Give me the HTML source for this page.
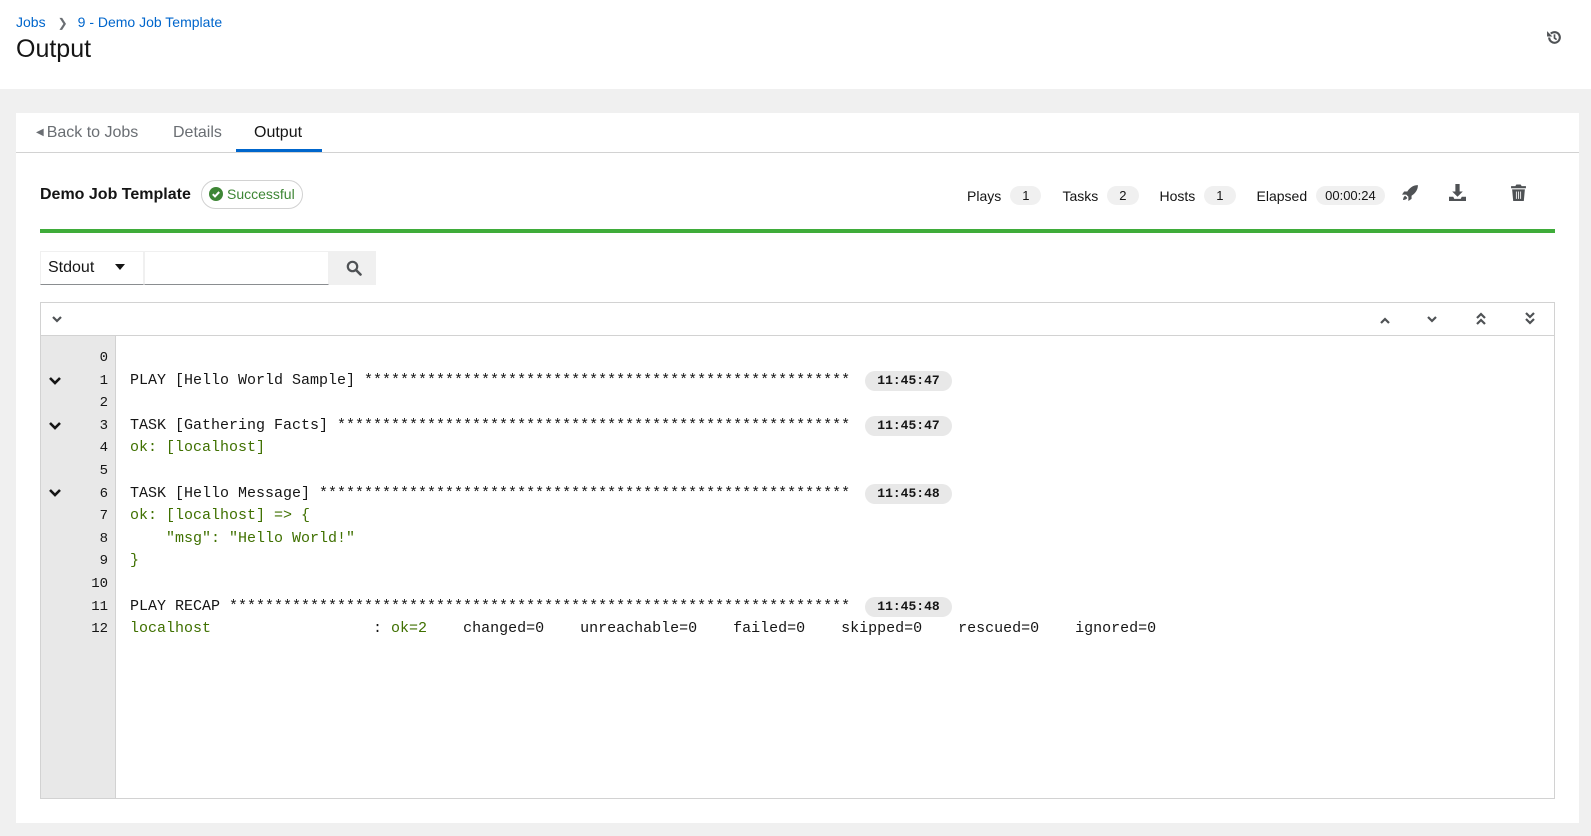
<!DOCTYPE html>
<html><head><meta charset="utf-8"><style>
*{box-sizing:border-box;margin:0;padding:0}
body{width:1591px;height:836px;background:#f0f0f0;font-family:"Liberation Sans",sans-serif;color:#151515;position:relative;overflow:hidden}
.hdr{position:absolute;left:0;top:0;width:1591px;height:89px;background:#fff}
.bc{position:absolute;left:16px;top:14px;font-size:14px;color:#06c}
.bc .sep{color:#6a6e73;margin:0 10px 0 12px;font-size:12px}
h1{position:absolute;left:16px;top:35px;font-size:25px;font-weight:400}
.card{position:absolute;left:16px;top:113px;width:1563px;height:710px;background:#fff}
.tabs{position:absolute;left:0;top:0;width:1563px;height:40px;border-bottom:1px solid #d2d2d2}
.tab{position:absolute;top:11px;font-size:16px;color:#6a6e73}
.ul{position:absolute;left:220px;top:36px;width:86px;height:3px;background:#06c}
.mono{font-family:"Liberation Mono",monospace}
.abs{position:absolute}
.pill{display:inline-block;background:#f0f0f0;border-radius:12px;font-size:13px;padding:2px 12px;margin-left:9px;vertical-align:1px}
.code{position:absolute;left:130px;font-size:15px;white-space:pre;line-height:22.6px}
.g{color:#3f7000}
.ln{position:absolute;width:68px;text-align:right;font-size:14px;left:40px}
.ts{position:absolute;left:865px;width:87px;height:20px;background:#e8e8e8;border-radius:10px;font:bold 13px "Liberation Mono",monospace;text-align:center;line-height:20px}
</style></head><body>
<div class="hdr">
<div class="bc">Jobs<span class="sep">&#10095;</span>9 - Demo Job Template</div>
<h1>Output</h1>
<svg class="abs" style="left:1546px;top:29px" width="17" height="17" viewBox="0 0 16 16"><path d="M3 8a5 5 0 1 0 1.5-3.6" fill="none" stroke="#4f5255" stroke-width="2"/><path d="M1 2v5h5z" fill="#4f5255"/><path d="M8 5v3.5l2 1.5" fill="none" stroke="#4f5255" stroke-width="1.6"/></svg>
</div>
<div class="card">
<div class="tabs">
<div class="tab" style="left:20px"><span style="font-size:10px;vertical-align:2px;margin-right:3px">&#9664;</span>Back to Jobs</div>
<div class="tab" style="left:157px">Details</div>
<div class="tab" style="left:238px;color:#151515">Output</div>
<div class="ul"></div>
</div>
<div class="abs" style="left:24px;top:73px;font-size:16px;font-weight:bold">Demo Job Template</div>
<div class="abs" style="left:185px;top:67px;width:102px;height:29px;border:1px solid #d2d2d2;border-radius:15px;font-size:14px;color:#3e8635;line-height:27px;padding-left:25px">Successful
<svg class="abs" style="left:7px;top:6px" width="14" height="14" viewBox="0 0 14 14"><circle cx="7" cy="7" r="7" fill="#3e8635"/><path d="M3.8 7.2l2.2 2.2 4.2-4.4" fill="none" stroke="#fff" stroke-width="2"/></svg></div>
<div class="abs" style="left:951px;top:73px;font-size:14px;white-space:nowrap">Plays<span class="pill">1</span><span style="margin-left:21px">Tasks</span><span class="pill">2</span><span style="margin-left:21px">Hosts</span><span class="pill">1</span><span style="margin-left:21px">Elapsed</span><span class="pill" style="padding:2px 9px">00:00:24</span></div>
<svg class="abs" style="left:1386px;top:71px" width="17" height="17" viewBox="0 0 16 16"><path d="M15 1C10 1 7 4 5 7H2L0 10h4l2 2v4l3-2v-3c3-2 6-5 6-10z" fill="#4f5255"/><path d="M3 11c-2 1-2 4-2 4s3 0 4-2z" fill="#4f5255"/></svg>
<svg class="abs" style="left:1433px;top:71px" width="17" height="17" viewBox="0 0 16 16"><path d="M6 0h4v7h3l-5 5-5-5h3z" fill="#4f5255"/><path d="M0 12h4l1 2h6l1-2h4v4H0z" fill="#4f5255"/></svg>
<svg class="abs" style="left:1495px;top:71px" width="15" height="17" viewBox="0 0 14 16"><path d="M0 2h4l1-1.5h4L10 2h4v2H0z" fill="#4f5255"/><path d="M1 5h12l-1 11H2z" fill="#4f5255"/><path d="M5 7v7M7 7v7M9 7v7" stroke="#fff" stroke-width=".8"/></svg>
<div class="abs" style="left:24px;top:116px;width:1515px;height:4px;background:#3fac3a"></div>
<div class="abs" style="left:24px;top:138px;width:104px;height:34px;border:1px solid #f0f0f0;border-bottom-color:#8a8d90;font-size:16px;line-height:32px;padding-left:7px">Stdout<span style="position:absolute;left:74px;top:12px;border:5px solid transparent;border-top:6px solid #151515"></span></div>
<div class="abs" style="left:128px;top:138px;width:185px;height:34px;border:1px solid #f0f0f0;border-bottom-color:#8a8d90"></div>
<div class="abs" style="left:313px;top:138px;width:47px;height:34px;background:#f0f0f0"></div>
<svg class="abs" style="left:330px;top:147px" width="16" height="16" viewBox="0 0 16 16"><circle cx="6.5" cy="6.5" r="4.7" fill="none" stroke="#4f5255" stroke-width="2.2"/><path d="M10 10l4.5 4.5" stroke="#4f5255" stroke-width="2.6" stroke-linecap="round"/></svg>
</div>
<div class="abs" style="left:40px;top:302px;width:1515px;height:497px;border:1px solid #d2d2d2;background:#fff"></div>
<div class="abs" style="left:40px;top:335px;width:1515px;height:1px;background:#d2d2d2"></div>
<div class="abs" style="left:41px;top:336px;width:75px;height:462px;background:#e8e8e8;border-right:1px solid #d2d2d2"></div>
<svg class="abs" style="left:0;top:0;pointer-events:none" width="1591" height="836">
<g fill="none" stroke="#4f5255" stroke-width="2.2">
<path d="M53 317l4 4 4-4"/>
<path d="M1381 323l4-4 4 4"/>
<path d="M1428 317l4 4 4-4"/>
<path d="M1477 318l4-4 4 4M1477 324l4-4 4 4"/>
<path d="M1526 313l4 4 4-4M1526 319l4 4 4-4"/>
</g>
<g fill="none" stroke="#151515" stroke-width="2.6">
<path d="M50 378l5 5 5-5"/><path d="M50 423l5 5 5-5"/><path d="M50 490l5 5 5-5"/>
</g>
</svg>
<div class="mono">
<div class="ln" style="top:347px;line-height:22.6px">0<br>1<br>2<br>3<br>4<br>5<br>6<br>7<br>8<br>9<br>10<br>11<br>12</div>
<div class="code" style="top:347px"><br>PLAY [Hello World Sample] ******************************************************<br><br>TASK [Gathering Facts] *********************************************************<br><span class="g">ok: [localhost]</span><br><br>TASK [Hello Message] ***********************************************************<br><span class="g">ok: [localhost] =&gt; {<br>    "msg": "Hello World!"<br>}</span><br><br>PLAY RECAP *********************************************************************<br><span class="g">localhost</span>                  : <span class="g">ok=2</span>    changed=0    unreachable=0    failed=0    skipped=0    rescued=0    ignored=0</div>
</div>
<div class="ts" style="top:371px">11:45:47</div>
<div class="ts" style="top:416px">11:45:47</div>
<div class="ts" style="top:484px">11:45:48</div>
<div class="ts" style="top:597px">11:45:48</div>
</body></html>
